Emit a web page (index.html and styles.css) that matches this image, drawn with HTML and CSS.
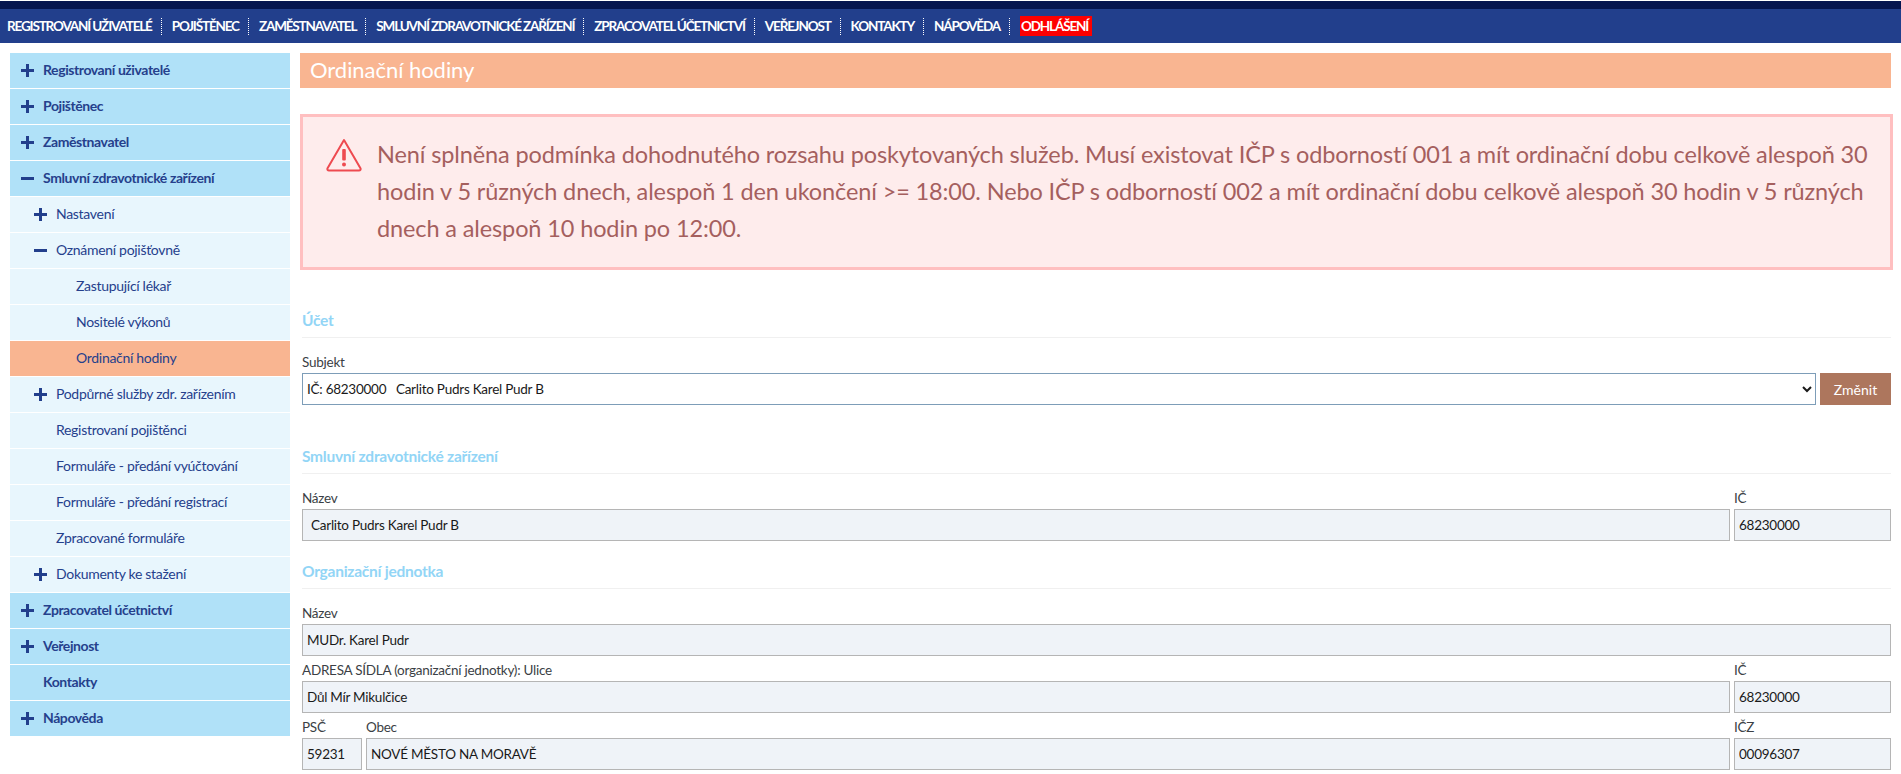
FILE: index.html
```html
<!DOCTYPE html>
<html lang="cs">
<head>
<meta charset="utf-8">
<title>Ordinační hodiny</title>
<link rel="stylesheet" href="styles.css">
</head>
<body>
<div class="topstrip"></div>
<nav class="topnav">
  <a class="topnav-link w1">REGISTROVANÍ UŽIVATELÉ</a>
  <a class="topnav-link">POJIŠTĚNEC</a>
  <a class="topnav-link">ZAMĚSTNAVATEL</a>
  <a class="topnav-link">SMLUVNÍ ZDRAVOTNICKÉ ZAŘÍZENÍ</a>
  <a class="topnav-link">ZPRACOVATEL ÚČETNICTVÍ</a>
  <a class="topnav-link">VEŘEJNOST</a>
  <a class="topnav-link">KONTAKTY</a>
  <a class="topnav-link">NÁPOVĚDA</a>
  <a class="topnav-logout">ODHLÁŠENÍ</a>
</nav>
<div class="page">
  <aside class="sidebar">
    <a class="item top"><span class="ico plus"></span>Registrovaní uživatelé</a>
    <a class="item top"><span class="ico plus"></span>Pojištěnec</a>
    <a class="item top"><span class="ico plus"></span>Zaměstnavatel</a>
    <a class="item top"><span class="ico minus"></span>Smluvní zdravotnické zařízení</a>
    <a class="item sub"><span class="ico plus"></span>Nastavení</a>
    <a class="item sub"><span class="ico minus"></span>Oznámení pojišťovně</a>
    <a class="item leaf">Zastupující lékař</a>
    <a class="item leaf">Nositelé výkonů</a>
    <a class="item leaf active">Ordinační hodiny</a>
    <a class="item sub"><span class="ico plus"></span>Podpůrné služby zdr. zařízením</a>
    <a class="item sub"><span class="ico none"></span>Registrovaní pojištěnci</a>
    <a class="item sub"><span class="ico none"></span>Formuláře - předání vyúčtování</a>
    <a class="item sub"><span class="ico none"></span>Formuláře - předání registrací</a>
    <a class="item sub"><span class="ico none"></span>Zpracované formuláře</a>
    <a class="item sub"><span class="ico plus"></span>Dokumenty ke stažení</a>
    <a class="item top"><span class="ico plus"></span>Zpracovatel účetnictví</a>
    <a class="item top"><span class="ico plus"></span>Veřejnost</a>
    <a class="item top"><span class="ico none"></span>Kontakty</a>
    <a class="item top"><span class="ico plus"></span>Nápověda</a>
  </aside>
  <main class="main">
    <h1 class="title">Ordinační hodiny</h1>
    <div class="alert">
      <svg class="alert-icon" viewBox="0 0 36 34" width="36" height="34" aria-hidden="true">
        <path d="M18 2 L34.6 30.4 Q35 32.5 33 32.5 L3 32.5 Q1 32.5 1.4 30.4 Z" fill="none" stroke="#ee4a50" stroke-width="2" stroke-linejoin="round"/>
        <rect x="16.2" y="11" width="3.6" height="11.5" rx="1" fill="#ee4a50"/>
        <circle cx="18" cy="26.6" r="2" fill="#ee4a50"/>
      </svg>
      <p class="alert-text">Není splněna podmínka dohodnutého rozsahu poskytovaných služeb. Musí existovat IČP s odborností 001 a mít ordinační dobu celkově alespoň 30<br>hodin v 5 různých dnech, alespoň 1 den ukončení &gt;= 18:00. Nebo IČP s odborností 002 a mít ordinační dobu celkově alespoň 30 hodin v 5 různých<br>dnech a alespoň 10 hodin po 12:00.</p>
    </div>
    <form class="form">
      <h2 class="section first">Účet</h2>
      <div class="field lead">
        <label class="label">Subjekt</label>
        <div class="row">
          <select class="select"><option>IČ: 68230000&nbsp;&nbsp; Carlito Pudrs Karel Pudr B</option></select>
          <button type="button" class="btn">Změnit</button>
        </div>
      </div>
      <h2 class="section second">Smluvní zdravotnické zařízení</h2>
      <div class="row lead">
        <div class="field grow">
          <label class="label">Název</label>
          <input class="input pad" readonly value="Carlito Pudrs Karel Pudr B">
        </div>
        <div class="field side">
          <label class="label">IČ</label>
          <input class="input" readonly value="68230000">
        </div>
      </div>
      <h2 class="section third">Organizační jednotka</h2>
      <div class="field lead">
        <label class="label">Název</label>
        <input class="input" readonly value="MUDr. Karel Pudr">
      </div>
      <div class="row next">
        <div class="field grow">
          <label class="label">ADRESA SÍDLA (organizační jednotky): Ulice</label>
          <input class="input" readonly value="Důl Mír Mikulčice">
        </div>
        <div class="field side">
          <label class="label">IČ</label>
          <input class="input" readonly value="68230000">
        </div>
      </div>
      <div class="row next">
        <div class="field psc">
          <label class="label">PSČ</label>
          <input class="input" readonly value="59231">
        </div>
        <div class="field grow">
          <label class="label">Obec</label>
          <input class="input" readonly value="NOVÉ MĚSTO NA MORAVĚ">
        </div>
        <div class="field side">
          <label class="label">IČZ</label>
          <input class="input" readonly value="00096307">
        </div>
      </div>
    </form>
  </main>
</div>
</body>
</html>
```
FILE: styles.css
```css
* { box-sizing: border-box; }
html, body { height: 100%; overflow: hidden; }
body {
  margin: 0;
  background: #fff;
  font-family: "Lato", "Open Sans", sans-serif;
  color: #333;
}
.topstrip { height: 8px; margin-top: 1px; background: #05154f; }
.topnav {
  display: flex;
  align-items: center;
  height: 34px;
  background: #223f8c;
  padding-left: 7px;
}
.topnav-link {
  color: #fff;
  font-size: 13.5px;
  font-weight: 700;
  letter-spacing: -1.16px;
  line-height: 17px;
  padding-right: 9px;
  margin-right: 10px;
  border-right: 1px dotted #fff;
  white-space: nowrap;
}
.topnav-logout {
  color: #fff;
  background: #fe0000;
  font-size: 13.5px;
  font-weight: 700;
  letter-spacing: -1.16px;
  line-height: 20px;
  padding: 0 4px 0 1px;
  white-space: nowrap;
}
.page { display: flex; padding: 10px 10px 0; align-items: flex-start; }
.sidebar { flex: 0 0 280px; display: flex; flex-direction: column; gap: 1px; }
.item {
  display: flex;
  align-items: center;
  height: 35px;
  padding-bottom: 2px;
  color: #25408c;
  font-size: 14px;
  letter-spacing: -0.3px;
  white-space: nowrap;
}
.item.top { background: #b0e1f8; padding-left: 11px; font-weight: 700; letter-spacing: -0.42px; }
.item.sub { background: #e8f6fd; padding-left: 24px; }
.item.leaf { background: #e8f6fd; padding-left: 66px; }
.item.leaf.active { background: #f9b591; }
.ico { position: relative; flex: 0 0 13px; width: 13px; height: 13px; margin: 2px 9px 0 0; }
.plus::before, .minus::before {
  content: "";
  position: absolute;
  left: 0;
  top: 5px;
  width: 13px;
  height: 3px;
  background: #223f8c;
}
.plus::after {
  content: "";
  position: absolute;
  left: 5px;
  top: 0;
  width: 3px;
  height: 13px;
  background: #223f8c;
}
.main { flex: 1 1 auto; margin-left: 10px; min-width: 0; }
.title {
  margin: 0;
  height: 35px;
  line-height: 34px;
  padding-left: 10px;
  background: #f9b591;
  color: #fff;
  font-size: 22px;
  font-weight: 400;
  letter-spacing: -0.05px;
}
.alert {
  display: flex;
  align-items: flex-start;
  margin: 26px -2px 0 0;
  height: 156px;
  padding: 19px 20px 0 23px;
  background: #feecec;
  border: 3px solid #ffbfc0;
}
.alert-icon { flex: 0 0 36px; margin: 2px 15px 0 0; }
.alert-text {
  margin: 0;
  color: #a55f5e;
  font-size: 23.5px;
  letter-spacing: -0.12px;
  line-height: 37px;
  white-space: nowrap;
}
.form { padding-left: 2px; }
.section {
  margin: 0;
  height: 29px;
  line-height: 23px;
  border-bottom: 1px solid #f0f0f0;
  color: #92d5f6;
  font-size: 15.5px;
  font-weight: 700;
  letter-spacing: -0.25px;
}
.section.first { margin-top: 39px; }
.section.second { margin-top: 40px; }
.section.third { margin-top: 19px; }
.lead { margin-top: 14px; }
.next { margin-top: 4px; }
.row { display: flex; gap: 4px; }
.field { display: flex; flex-direction: column; }
.grow { flex: 1 1 auto; min-width: 0; }
.side { flex: 0 0 157px; }
.psc { flex: 0 0 60px; }
.label {
  height: 20px;
  line-height: 20px;
  margin-bottom: 1px;
  font-size: 13.5px;
  letter-spacing: -0.25px;
  color: #3b3f45;
}
.input {
  width: 100%;
  height: 32px;
  padding: 0 4px;
  border: 1px solid #b5b5b5;
  background: #eff3f8;
  color: #1a1a1a;
  font: 13.5px "Lato", "Open Sans", sans-serif;
  letter-spacing: -0.25px;
  outline: 0;
}
.input.pad { padding-left: 8px; }
.select {
  flex: 1 1 auto;
  min-width: 0;
  height: 32px;
  padding: 0;
  border: 1px solid #7d9db8;
  background: #fff;
  color: #1a1a1a;
  font: 13.5px "Lato", "Open Sans", sans-serif;
  letter-spacing: -0.25px;
}
.btn {
  flex: 0 0 71px;
  height: 32px;
  border: 0;
  background: #ad765d;
  color: #fff;
  font: 14px "Lato", "Open Sans", sans-serif;
}
```
